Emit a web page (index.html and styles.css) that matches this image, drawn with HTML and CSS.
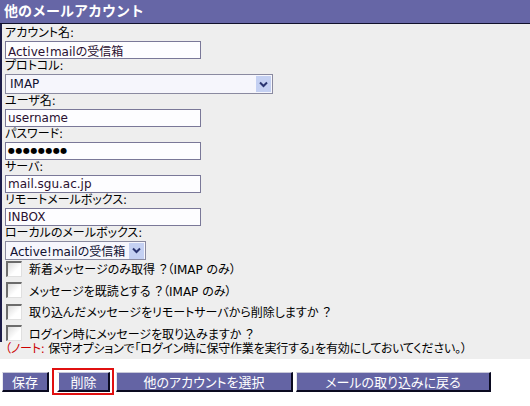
FILE: index.html
```html
<!DOCTYPE html>
<html lang="ja">
<head>
<meta charset="utf-8">
<link rel="stylesheet" href="styles.css">
</head>
<body>
<div class="panel">
  <div class="header">他のメールアカウント</div>
  <div class="form">
    <div class="label">アカウント名:</div>
    <input class="text" type="text" value="Active!mailの受信箱">
    <div class="label">プロトコル:</div>
    <div class="sel sel-wide">
      <span class="sel-val">IMAP</span>
      <span class="sel-btn"><svg width="9" height="7" viewBox="0 0 9 7"><path d="M1 1.5 L4.5 5 L8 1.5" fill="none" stroke="#2a3470" stroke-width="2"/></svg></span>
    </div>
    <div class="label">ユーザ名:</div>
    <input class="text" type="text" value="username">
    <div class="label">パスワード:</div>
    <div class="text pw">●●●●●●●●</div>
    <div class="label">サーバ:</div>
    <input class="text" type="text" value="mail.sgu.ac.jp">
    <div class="label">リモートメールボックス:</div>
    <input class="text" type="text" value="INBOX">
    <div class="label">ローカルのメールボックス:</div>
    <div class="sel sel-narrow">
      <span class="sel-val">Active!mailの受信箱</span>
      <span class="sel-btn"><svg width="9" height="7" viewBox="0 0 9 7"><path d="M1 1.5 L4.5 5 L8 1.5" fill="none" stroke="#2a3470" stroke-width="2"/></svg></span>
    </div>
    <div class="checks">
      <div class="check"><span class="box"></span><span>新着メッセージのみ取得 ？（IMAP のみ）</span></div>
      <div class="check"><span class="box"></span><span>メッセージを既読とする ？（IMAP のみ）</span></div>
      <div class="check"><span class="box"></span><span>取り込んだメッセージをリモートサーバから削除しますか ？</span></div>
      <div class="check"><span class="box"></span><span>ログイン時にメッセージを取り込みますか ？</span></div>
    </div>
  </div>
  <div class="note"><span class="red">（ノート:</span> 保守オプションで「ログイン時に保守作業を実行する」を有効にしておいてください。）</div>
</div>
<div class="buttons">
  <span class="btn b-save">保存</span>
  <span class="mark"><span class="btn b-del">削除</span></span>
  <span class="btn b-other">他のアカウントを選択</span>
  <span class="btn b-back">メールの取り込みに戻る</span>
</div>
</body>
</html>
```
FILE: styles.css
```css
html, body {
  margin: 0;
  padding: 0;
  background: #ffffff;
}
body {
  width: 530px;
  height: 406px;
  overflow: hidden;
  font-family: "DejaVu Sans", "Noto Sans CJK JP", sans-serif;
  font-size: 12px;
  color: #000;
  font-feature-settings: "palt";
}
.panel {
  background: #eeeeee;
  padding-bottom: 2px;
}
.header {
  height: 23px;
  line-height: 23px;
  background: #6666a6;
  border-bottom: 1px solid #10102a;
  color: #fff;
  font-weight: bold;
  font-size: 14px;
  padding-left: 4px;
  font-feature-settings: normal;
}
.form {
  border-left: 2px solid #1c1c48;
  padding: 2px 0 0 3px;
  display: flex;
  flex-direction: column;
  align-items: flex-start;
}
.label {
  height: 15px;
  line-height: 15px;
}
.text {
  box-sizing: border-box;
  width: 196px;
  height: 18px;
  margin: 0;
  padding: 0 2px;
  border: 1px solid #7a7898;
  background: #fdfdff;
  color: #2a1030;
  font-family: "DejaVu Sans", "Noto Sans CJK JP", sans-serif;
  font-size: 12px;
  line-height: 16px;
  font-feature-settings: "palt";
  outline: none;
}
.pw {
  font-size: 8px;
  letter-spacing: 0.5px;
  line-height: 16px;
  color: #000;
}
.sel {
  box-sizing: border-box;
  height: 20px;
  border: 1px solid #8a8aa0;
  background: #f6f6fc;
  display: flex;
  align-items: center;
  padding: 0 1px 0 4px;
  font-size: 12px;
  color: #101030;
}
.sel-wide { width: 268px; }
.sel-narrow { width: 141px; height: 19px; }
.sel-val { flex: 1; white-space: nowrap; overflow: hidden; }
.sel-btn {
  width: 15px;
  height: 16px;
  background: #c4d0f2;
  display: flex;
  align-items: center;
  justify-content: center;
}
.checks {
  display: flex;
  flex-direction: column;
  margin: -2px 0 -2px -3px;
}
.check {
  height: 21.5px;
  display: flex;
  align-items: center;
  gap: 7px;
  padding-left: 4px;
}
.box {
  box-sizing: border-box;
  width: 16px;
  height: 16px;
  border-top: 2px solid #6c6c6c;
  border-left: 2px solid #6c6c6c;
  border-right: 1px solid #e0e0e0;
  border-bottom: 1px solid #e0e0e0;
  background: linear-gradient(135deg, #dcdcdc 0%, #ffffff 60%);
}
.note {
  padding: 0 0 0 5px;
  height: 15px;
  line-height: 15px;
  white-space: nowrap;
  letter-spacing: -0.2px;
}
.red { color: #cc0000; }
.buttons {
  display: flex;
  align-items: center;
  padding: 9px 0 0 2px;
}
.btn {
  box-sizing: border-box;
  height: 20px;
  display: inline-flex;
  align-items: center;
  justify-content: center;
  background: #6464a4;
  color: #fff;
  font-size: 13px;
  border-top: 1px solid #c8c8d8;
  border-left: 1px solid #e8e8f0;
  border-right: 2px solid #0a0a20;
  border-bottom: 2px solid #0a0a20;
}
.b-save { width: 47px; }
.mark {
  display: inline-flex;
  border: 2px solid #e01010;
  padding: 2px 2px 1px 3px;
  margin-left: 3px;
}
.b-del { width: 53px; border-left: 2px solid #ffffff; }
.b-other { width: 177px; margin-left: 2px; }
.b-back { width: 195px; margin-left: 3px; }
```
